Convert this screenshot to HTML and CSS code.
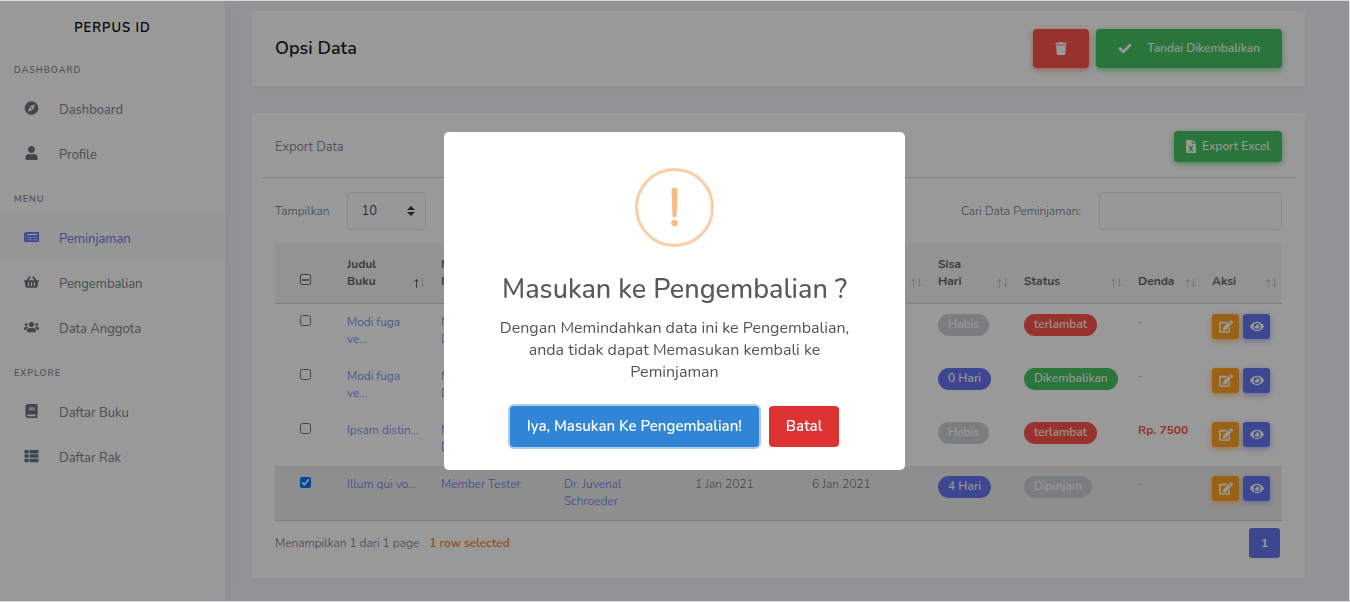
FILE: index.html
```html
<!DOCTYPE html>
<html lang="id">
<head>
<meta charset="utf-8">
<title>Perpus ID - Peminjaman</title>
<link rel="stylesheet" href="styles.css">
</head>
<body>
<svg class="sprite" aria-hidden="true">
  <symbol id="i-compass" viewBox="0 0 496 512"><path d="M225.38 233.37c-12.5 12.5-12.5 32.76 0 45.25 12.49 12.5 32.76 12.5 45.25 0 12.5-12.5 12.5-32.76 0-45.25-12.5-12.49-32.76-12.49-45.25 0zM248 8C111.03 8 0 119.03 0 256s111.03 248 248 248 248-111.03 248-248S384.97 8 248 8zm126.14 148.05L308.17 300.4a31.938 31.938 0 0 1-15.77 15.77l-144.34 65.97c-16.65 7.61-33.81-9.55-26.2-26.2l65.98-144.35a31.938 31.938 0 0 1 15.77-15.77l144.34-65.97c16.65-7.6 33.8 9.55 26.19 26.2z"/></symbol>
  <symbol id="i-user" viewBox="0 0 448 512"><path d="M224 256c70.7 0 128-57.3 128-128S294.7 0 224 0 96 57.3 96 128s57.3 128 128 128zm89.6 32h-16.7c-22.2 10.2-46.9 16-72.9 16s-50.6-5.8-72.9-16h-16.7C60.2 288 0 348.2 0 422.4V464c0 26.5 21.5 48 48 48h352c26.5 0 48-21.5 48-48v-41.6c0-74.2-60.2-134.4-134.4-134.4z"/></symbol>
  <symbol id="i-news" viewBox="0 0 576 512"><path fill-rule="evenodd" d="M552 64H88c-13.3 0-24 10.7-24 24v8H24c-13.3 0-24 10.7-24 24v272c0 30.9 25.1 56 56 56h472c26.5 0 48-21.5 48-48V88c0-13.3-10.7-24-24-24zM56 400a8 8 0 0 1-8-8V144h16v248a8 8 0 0 1-8 8zM140 352h152a12 12 0 0 1 12 12v8a12 12 0 0 1-12 12H140a12 12 0 0 1-12-12v-8a12 12 0 0 1 12-12zM348 352h152a12 12 0 0 1 12 12v8a12 12 0 0 1-12 12H348a12 12 0 0 1-12-12v-8a12 12 0 0 1 12-12zM140 256h152a12 12 0 0 1 12 12v8a12 12 0 0 1-12 12H140a12 12 0 0 1-12-12v-8a12 12 0 0 1 12-12zM348 256h152a12 12 0 0 1 12 12v8a12 12 0 0 1-12 12H348a12 12 0 0 1-12-12v-8a12 12 0 0 1 12-12zM140 128h360a12 12 0 0 1 12 12v40a12 12 0 0 1-12 12H140a12 12 0 0 1-12-12v-40a12 12 0 0 1 12-12z"/></symbol>
  <symbol id="i-basket" viewBox="0 0 576 512"><path d="M576 216v16c0 13.255-10.745 24-24 24h-8l-26.113 182.788C514.509 462.435 494.257 480 470.37 480H105.63c-23.887 0-44.139-17.565-47.518-41.212L32 256h-8c-13.255 0-24-10.745-24-24v-16c0-13.255 10.745-24 24-24h67.341l106.78-146.821c10.395-14.292 30.407-17.453 44.701-7.058 14.293 10.395 17.453 30.408 7.058 44.701L170.477 192h235.046L326.12 82.821c-10.395-14.292-7.234-34.306 7.059-44.701 14.291-10.395 34.306-7.235 44.701 7.058L484.659 192H552c13.255 0 24 10.745 24 24zM312 392V280c0-13.255-10.745-24-24-24s-24 10.745-24 24v112c0 13.255 10.745 24 24 24s24-10.745 24-24zm112 0V280c0-13.255-10.745-24-24-24s-24 10.745-24 24v112c0 13.255 10.745 24 24 24s24-10.745 24-24zm-224 0V280c0-13.255-10.745-24-24-24s-24 10.745-24 24v112c0 13.255 10.745 24 24 24s24-10.745 24-24z"/></symbol>
  <symbol id="i-users" viewBox="0 0 640 512"><path d="M96 224c35.3 0 64-28.7 64-64s-28.7-64-64-64-64 28.7-64 64 28.7 64 64 64zm448 0c35.3 0 64-28.7 64-64s-28.7-64-64-64-64 28.7-64 64 28.7 64 64 64zm32 32h-64c-17.6 0-33.5 7.1-45.1 18.6 40.3 22.1 68.9 62 75.1 109.4h66c17.7 0 32-14.3 32-32v-32c0-35.3-28.7-64-64-64zm-256 0c61.9 0 112-50.1 112-112S381.9 32 320 32 208 82.1 208 144s50.1 112 112 112zm76.8 32h-8.3c-20.8 10-43.9 16-68.5 16s-47.6-6-68.5-16h-8.3C179.6 288 128 339.6 128 403.2V432c0 26.5 21.5 48 48 48h288c26.5 0 48-21.5 48-48v-28.8c0-63.6-51.6-115.2-115.2-115.2zm-223.7-13.4C161.5 263.1 145.6 256 128 256H64c-35.3 0-64 28.7-64 64v32c0 17.7 14.3 32 32 32h65.9c6.3-47.4 34.9-87.3 75.2-109.4z"/></symbol>
  <symbol id="i-book" viewBox="0 0 448 512"><path d="M448 360V24c0-13.3-10.7-24-24-24H96C43 0 0 43 0 96v320c0 53 43 96 96 96h328c13.3 0 24-10.7 24-24v-16c0-7.5-3.5-14.3-8.9-18.7-4.2-15.4-4.2-59.3 0-74.7 5.4-4.3 8.9-11.1 8.9-18.6zM128 134c0-3.3 2.7-6 6-6h212c3.3 0 6 2.7 6 6v20c0 3.3-2.7 6-6 6H134c-3.3 0-6-2.7-6-6v-20zm0 64c0-3.3 2.7-6 6-6h212c3.3 0 6 2.7 6 6v20c0 3.3-2.7 6-6 6H134c-3.3 0-6-2.7-6-6v-20zm253.4 250H96c-17.7 0-32-14.3-32-32 0-17.6 14.4-32 32-32h285.4c-1.9 17.1-1.9 46.9 0 64z"/></symbol>
  <symbol id="i-list" viewBox="0 0 512 512"><rect x="0" y="32" width="149" height="128" rx="24"/><rect x="181" y="32" width="331" height="128" rx="24"/><rect x="0" y="192" width="149" height="128" rx="24"/><rect x="181" y="192" width="331" height="128" rx="24"/><rect x="0" y="352" width="149" height="128" rx="24"/><rect x="181" y="352" width="331" height="128" rx="24"/></symbol>
  <symbol id="i-check" viewBox="0 0 512 512"><path d="M173.898 439.404l-166.4-166.4c-9.997-9.997-9.997-26.206 0-36.204l36.203-36.204c9.997-9.998 26.207-9.998 36.204 0L192 312.69 432.095 72.596c9.997-9.997 26.207-9.997 36.204 0l36.203 36.204c9.997 9.997 9.997 26.206 0 36.204l-294.4 294.401c-9.998 9.997-26.207 9.997-36.204-.001z"/></symbol>
  <symbol id="i-trash" viewBox="0 0 448 512"><path d="M432 32H312l-9.4-18.7A24 24 0 0 0 281.1 0H166.8a23.72 23.72 0 0 0-21.4 13.3L136 32H16A16 16 0 0 0 0 48v32a16 16 0 0 0 16 16h416a16 16 0 0 0 16-16V48a16 16 0 0 0-16-16zM53.2 467a48 48 0 0 0 47.9 45h245.8a48 48 0 0 0 47.9-45L416 128H32z"/></symbol>
  <symbol id="i-edit" viewBox="0 0 576 512"><path d="M402.6 83.2l90.2 90.2c3.8 3.8 3.8 10 0 13.8L274.4 405.6l-92.8 10.3c-12.4 1.4-22.9-9.1-21.5-21.5l10.3-92.8L388.8 83.2c3.8-3.8 10-3.8 13.8 0zm162-22.9l-48.8-48.8c-15.2-15.2-39.9-15.2-55.2 0l-35.4 35.4c-3.8 3.8-3.8 10 0 13.8l90.2 90.2c3.8 3.8 10 3.8 13.8 0l35.4-35.4c15.2-15.3 15.2-40 0-55.2zM384 346.2V448H64V128h229.8c3.2 0 6.2-1.3 8.5-3.5l40-40c7.6-7.6 2.2-20.5-8.5-20.5H48C21.5 64 0 85.5 0 112v352c0 26.5 21.5 48 48 48h352c26.5 0 48-21.5 48-48V306.2c0-10.7-12.9-16-20.5-8.5l-40 40c-2.2 2.3-3.5 5.3-3.5 8.5z"/></symbol>
  <symbol id="i-eye" viewBox="0 0 576 512"><path d="M572.52 241.4C518.29 135.59 410.93 64 288 64S57.68 135.64 3.48 241.41a32.35 32.35 0 0 0 0 29.19C57.71 376.41 165.07 448 288 448s230.32-71.64 284.52-177.41a32.35 32.35 0 0 0 0-29.19zM288 400a144 144 0 1 1 144-144 143.93 143.93 0 0 1-144 144zm0-240a95.31 95.31 0 0 0-25.31 3.79 47.85 47.85 0 0 1-66.9 66.9A95.78 95.78 0 1 0 288 160z"/></symbol>
  <symbol id="i-excel" viewBox="0 0 384 512"><path d="M224 136V0H24C10.7 0 0 10.7 0 24v464c0 13.3 10.7 24 24 24h336c13.3 0 24-10.7 24-24V160H248c-13.2 0-24-10.8-24-24zm60.1 106.5L224 336l60.1 93.5c5.1 8-.6 18.5-10.1 18.5h-34.9c-4.4 0-8.5-2.4-10.6-6.3C208.9 405.5 192 373 192 373c-6.4 14.8-10 20-36.6 68.8-2.1 3.9-6.1 6.3-10.5 6.3H110c-9.5 0-15.2-10.5-10.1-18.5l60.3-93.5-60.3-93.5c-5.2-8 .6-18.5 10.1-18.5h34.8c4.4 0 8.5 2.4 10.6 6.3 26.1 48.8 20 33.6 36.6 68.5 0 0 6.1-11.7 36.6-68.5 2.1-3.9 6.2-6.3 10.6-6.3H274c9.5-.1 15.2 10.4 10.1 18.4zM384 121.9v6.1H256V0h6.1c6.4 0 12.5 2.5 17 7l97.9 98c4.5 4.5 7 10.6 7 16.9z"/></symbol>
  <symbol id="i-sort" viewBox="0 0 11 10"><path class="up" d="M2.5 10V1M.5 3.5l2-2 2 2"/><path class="down" d="M8.5 0v9M6.5 6.5l2 2 2-2"/></symbol>
</svg>

<div class="layout">
  <aside class="sidebar">
    <a class="brand" href="#">PERPUS ID</a>
    <nav>
      <h2 class="nav-title">DASHBOARD</h2>
      <a class="nav-link" href="#"><svg class="nav-icon"><use href="#i-compass"/></svg>Dashboard</a>
      <a class="nav-link" href="#"><svg class="nav-icon"><use href="#i-user"/></svg>Profile</a>
      <h2 class="nav-title">MENU</h2>
      <a class="nav-link active" href="#"><svg class="nav-icon"><use href="#i-news"/></svg>Peminjaman</a>
      <a class="nav-link" href="#"><svg class="nav-icon"><use href="#i-basket"/></svg>Pengembalian</a>
      <a class="nav-link" href="#"><svg class="nav-icon"><use href="#i-users"/></svg>Data Anggota</a>
      <h2 class="nav-title">EXPLORE</h2>
      <a class="nav-link" href="#"><svg class="nav-icon"><use href="#i-book"/></svg>Daftar Buku</a>
      <a class="nav-link" href="#"><svg class="nav-icon"><use href="#i-list"/></svg>Daftar Rak</a>
    </nav>
  </aside>

  <main class="main">
    <section class="card options">
      <h1 class="options-title">Opsi Data</h1>
      <div class="options-actions">
        <button class="btn btn-lg danger" type="button" aria-label="Hapus"><svg class="icon"><use href="#i-trash"/></svg></button>
        <button class="btn btn-lg success" type="button"><svg class="icon icon-check"><use href="#i-check"/></svg>Tandai Dikembalikan</button>
      </div>
    </section>

    <section class="card">
      <header class="export">
        <span class="export-title">Export Data</span>
        <button class="btn success btn-export" type="button"><svg class="icon icon-file"><use href="#i-excel"/></svg>Export Excel</button>
      </header>
      <div class="card-body">
        <div class="filters">
          <div class="filter">
            <label for="length">Tampilkan</label>
            <span class="select-wrap">
              <select id="length" class="control select"><option>10</option><option>25</option></select>
              <svg class="caret" viewBox="0 0 8 10"><path d="M4 0l4 4H0zM4 10L0 6h8z"/></svg>
            </span>
          </div>
          <div class="filter search">
            <label for="search">Cari Data Peminjaman:</label>
            <input id="search" class="control search-input" type="text">
          </div>
        </div>

        <table class="table">
          <colgroup><col class="c-check"><col class="c-book"><col class="c-member"><col class="c-author"><col class="c-from"><col class="c-to"><col class="c-left"><col class="c-status"><col class="c-fine"><col class="c-action"></colgroup>
          <thead>
            <tr>
              <th class="check"><input class="all" type="checkbox" aria-label="Pilih semua"></th>
              <th>Judul<br>Buku<svg class="sort asc"><use href="#i-sort"/></svg></th>
              <th>N<br>P<svg class="sort"><use href="#i-sort"/></svg></th>
              <th><svg class="sort"><use href="#i-sort"/></svg></th>
              <th><svg class="sort"><use href="#i-sort"/></svg></th>
              <th><svg class="sort"><use href="#i-sort"/></svg></th>
              <th>Sisa<br>Hari<svg class="sort"><use href="#i-sort"/></svg></th>
              <th>Status<svg class="sort"><use href="#i-sort"/></svg></th>
              <th>Denda<svg class="sort"><use href="#i-sort"/></svg></th>
              <th>Aksi<svg class="sort"><use href="#i-sort"/></svg></th>
            </tr>
          </thead>
          <tbody>
            <tr>
              <td class="check"><input type="checkbox" aria-label="Pilih baris 1"></td>
              <td><a href="#">Modi fuga<br>ve...</a></td>
              <td><a href="#">M<br>D</a></td><td></td><td></td><td></td>
              <td><span class="badge muted">Habis</span></td>
              <td><span class="badge danger">terlambat</span></td>
              <td><span class="none">-</span></td>
              <td><div class="actions"><button class="act warning" type="button" aria-label="Ubah"><svg class="icon"><use href="#i-edit"/></svg></button><button class="act primary" type="button" aria-label="Lihat"><svg class="icon"><use href="#i-eye"/></svg></button></div></td>
            </tr>
            <tr>
              <td class="check"><input type="checkbox" aria-label="Pilih baris 2"></td>
              <td><a href="#">Modi fuga<br>ve...</a></td>
              <td><a href="#">M<br>D</a></td><td></td><td></td><td></td>
              <td><span class="badge primary">0 Hari</span></td>
              <td><span class="badge success">Dikembalikan</span></td>
              <td><span class="none">-</span></td>
              <td><div class="actions"><button class="act warning" type="button" aria-label="Ubah"><svg class="icon"><use href="#i-edit"/></svg></button><button class="act primary" type="button" aria-label="Lihat"><svg class="icon"><use href="#i-eye"/></svg></button></div></td>
            </tr>
            <tr>
              <td class="check"><input type="checkbox" aria-label="Pilih baris 3"></td>
              <td><a href="#">Ipsam distin...</a></td>
              <td><a href="#">M<br>D</a></td><td></td><td></td><td></td>
              <td><span class="badge muted">Habis</span></td>
              <td><span class="badge danger">terlambat</span></td>
              <td><strong class="fine">Rp. 7500</strong></td>
              <td><div class="actions"><button class="act warning" type="button" aria-label="Ubah"><svg class="icon"><use href="#i-edit"/></svg></button><button class="act primary" type="button" aria-label="Lihat"><svg class="icon"><use href="#i-eye"/></svg></button></div></td>
            </tr>
            <tr class="selected">
              <td class="check"><input type="checkbox" checked aria-label="Pilih baris 4"></td>
              <td><a href="#">Illum qui vo...</a></td>
              <td><a href="#">Member Tester</a></td>
              <td><a href="#">Dr. Juvenal<br>Schroeder</a></td>
              <td>1 Jan 2021</td>
              <td>6 Jan 2021</td>
              <td><span class="badge primary">4 Hari</span></td>
              <td><span class="badge muted">Dipinjam</span></td>
              <td><span class="none">-</span></td>
              <td><div class="actions"><button class="act warning" type="button" aria-label="Ubah"><svg class="icon"><use href="#i-edit"/></svg></button><button class="act primary" type="button" aria-label="Lihat"><svg class="icon"><use href="#i-eye"/></svg></button></div></td>
            </tr>
          </tbody>
        </table>

        <footer class="table-foot">
          <span>Menampilkan 1 dari 1 page</span>
          <strong class="rows">1 row selected</strong>
          <button class="page" type="button">1</button>
        </footer>
      </div>
    </section>
  </main>
</div>

<div class="overlay">
  <div class="modal" role="dialog" aria-modal="true" aria-labelledby="modal-title">
    <svg class="modal-icon" viewBox="0 0 79 79" aria-hidden="true">
      <circle cx="39.5" cy="39.5" r="38" fill="none" stroke="#facea8" stroke-width="3"/>
      <path fill="#f8bb86" d="M36.5 22.5a3 3 0 0 1 6 0l-1 25a2 2 0 0 1-4 0z"/>
      <circle cx="39.5" cy="55" r="3.3" fill="#f8bb86"/>
    </svg>
    <h2 class="modal-title" id="modal-title">Masukan ke Pengembalian ?</h2>
    <p class="modal-text">Dengan Memindahkan data ini ke Pengembalian, anda tidak dapat Memasukan kembali ke Peminjaman</p>
    <div class="modal-actions">
      <button class="modal-btn confirm" type="button">Iya, Masukan Ke Pengembalian!</button>
      <button class="modal-btn cancel" type="button">Batal</button>
    </div>
  </div>
</div>
</body>
</html>
```
FILE: styles.css
```css
* { box-sizing: border-box; }

body {
  margin: 0;
  background: #f4f6f9;
  color: #6c757d;
  font: 350 12px/17px Nunito, Lato, sans-serif;
}

button, input, select { font: inherit; }
a { color: #6777ef; text-decoration: none; }
svg { fill: currentColor; flex: none; }
.sprite { position: absolute; width: 0; height: 0; }

.layout { display: flex; min-height: 100vh; }

/* Sidebar */
.sidebar {
  flex: none;
  width: 225px;
  background: #fff;
  box-shadow: 0 4px 8px rgba(0, 0, 0, .03), 0 0 28px rgba(0, 0, 0, .04);
}
.brand {
  display: block;
  height: 47px;
  padding-top: 8px;
  color: #000;
  font-size: 13px;
  font-weight: 600;
  line-height: 40px;
  letter-spacing: 1px;
  text-align: center;
}
.nav-title {
  height: 39px;
  margin: 0;
  padding: 2px 14px 0;
  color: #868e96;
  font-size: 9px;
  font-weight: 600;
  line-height: 42px;
  letter-spacing: 1px;
}
.nav-link {
  display: flex;
  align-items: center;
  gap: 20px;
  height: 45px;
  padding: 4px 0 0 24px;
  color: #78828a;
  font-size: 13px;
  font-weight: 400;
}
.nav-icon { width: 15px; height: 14px; margin-top: -6px; color: #6c757d; }
.nav-link.active { background: #f8fafb; color: #6777ef; }
.active .nav-icon { color: #6777ef; }

/* Main column */
.main {
  flex: 1;
  display: flex;
  flex-direction: column;
  gap: 27px;
  padding: 11px 45px 24px 27px;
}
.card {
  background: #fff;
  border-radius: 3px;
  box-shadow: 0 4px 8px rgba(0, 0, 0, .03);
}
.options {
  display: flex;
  align-items: center;
  justify-content: space-between;
  padding: 18px 23px;
}
.options-title { margin: 0 0 2px; color: #191d21; font-size: 18px; font-weight: 650; line-height: 24px; }
.options-actions { display: flex; gap: 7px; }

.btn {
  display: flex;
  align-items: center;
  justify-content: center;
  border: 0;
  border-radius: 4px;
  color: #fff;
  font-size: 12px;
  font-weight: 500;
}
.btn-lg { height: 39px; padding: 0 22px; }
.icon { width: 12px; height: 13px; }
.icon-check { width: 14px; margin-right: 15px; }
.icon-file { width: 10px; margin-right: 6px; }
.btn-export { height: 31px; padding: 0 12px; }

.danger { background: #fc544b; }
.success { background: #47c363; }
.primary { background: #6777ef; }
.warning { background: #ffa426; }
.muted { background: #cdd3d8; }
.btn.danger { box-shadow: 0 2px 6px #fd9b96; }
.btn.success { box-shadow: 0 2px 6px #81d694; }
.act.primary { box-shadow: 0 2px 6px #acb5f6; }
.act.warning { box-shadow: 0 2px 6px #ffc473; }

.export {
  display: flex;
  align-items: center;
  justify-content: space-between;
  height: 65px;
  margin: 0 9px;
  padding: 2px 14px 0;
  border-bottom: 1px solid #dadada;
}
.export-title { padding-top: 2px; font-size: 13px; font-weight: 300; }

.card-body { padding: 14px 23px 20px; }
.filters { display: flex; justify-content: space-between; margin-bottom: 13px; }
.filter { display: flex; align-items: center; gap: 18px; }
.control {
  height: 38px;
  border: 1px solid #e4e6fc;
  border-radius: 4px;
  background: #fdfdff;
  color: #495057;
}
.select-wrap { position: relative; display: flex; }
.select { width: 79px; padding: 0 13px; appearance: none; font-size: 13px; font-weight: 400; }
.caret { position: absolute; top: 14px; right: 11px; width: 8px; height: 10px; color: #343a40; pointer-events: none; }
.search-input { width: 183px; }

/* Table */
.table { width: 100%; table-layout: fixed; border-collapse: separate; border-spacing: 0; border-bottom: 1px solid #d4d4d4; }
.c-check { width: 61px; }
.c-book { width: 94px; }
.c-member { width: 123px; }
.c-author { width: 131px; }
.c-from { width: 117px; }
.c-to { width: 126px; }
.c-left { width: 86px; }
.c-status { width: 114px; }
.c-fine { width: 74px; }
.c-action { width: 81px; }
.table th {
  position: relative;
  height: 61px;
  padding: 13px 11px;
  border-bottom: 1px solid #d4d4d4;
  background: #f5f5f5;
  color: #666;
  font-weight: 700;
  text-align: left;
  vertical-align: bottom;
}
.table td { height: 54px; padding: 10px 11px 0; vertical-align: top; white-space: nowrap; }
.table .check { text-align: center; }
.check input { display: inline-block; width: 11px; height: 11px; margin: 1px 0; vertical-align: top; }
th.check input { margin: 0 0 5px; vertical-align: bottom; }
.all {
  appearance: none;
  border: 1px solid #666;
  border-radius: 2px;
  background: linear-gradient(#888, #888) center / 7px 2px no-repeat #fff;
}
.sort { --sort-up: #cacaca; position: absolute; right: 5px; bottom: 15px; width: 11px; height: 10px; }
.sort.asc { --sort-up: #666; }
.up { fill: none; stroke: var(--sort-up); }
.down { fill: none; stroke: #cacaca; }
.selected { background: #ededed; }

.badge {
  display: inline-block;
  padding: 2px 10px 3px;
  border-radius: 11px;
  color: #fff;
  font-weight: 500;
}
.none { color: #98a6ad; }
.fine { color: #fc544b; font-weight: 700; }
.actions { display: flex; gap: 4px; }
.act {
  display: flex;
  align-items: center;
  justify-content: center;
  width: 27px;
  height: 25px;
  padding: 0;
  border: 0;
  border-radius: 3px;
  color: #fff;
}
.act .icon { width: 14px; }

.table-foot { display: flex; align-items: center; gap: 10px; padding: 7px 2px 0 0; }
.rows { color: #ff7b16; font-weight: 600; }
.page {
  width: 31px;
  height: 30px;
  margin-left: auto;
  border: 0;
  border-radius: 3px;
  background: #6777ef;
  color: #fff;
  font-weight: 700;
}

/* Confirmation dialog */
.overlay {
  position: fixed;
  inset: 1px 1px 1px 0;
  display: flex;
  align-items: center;
  justify-content: center;
  outline: 1px solid #d9dcdf;
  background: rgba(0, 0, 0, .4);
}
.modal {
  display: flex;
  flex-direction: column;
  align-items: center;
  width: 461px;
  max-width: 100%;
  padding: 36px 40px 23px;
  border-radius: 5px;
  background: #fff;
  text-align: center;
}
.modal-icon { width: 79px; height: 79px; }
.modal-title { margin: 25px 0 9px; color: #595959; font-size: 27px; font-weight: 500; line-height: 36px; }
.modal-text { margin: 0 0 23px; color: #545454; font-size: 16px; font-weight: 400; line-height: 22px; }
.modal-actions { display: flex; gap: 10px; }
.modal-btn {
  height: 41px;
  padding: 0 17px;
  border: 0;
  border-radius: 4px;
  color: #fff;
  font-size: 15px;
  font-weight: 600;
}
.confirm { background: #3085d6; box-shadow: 0 0 0 2px #b0cce8; }
.cancel { background: #d33; }
```
